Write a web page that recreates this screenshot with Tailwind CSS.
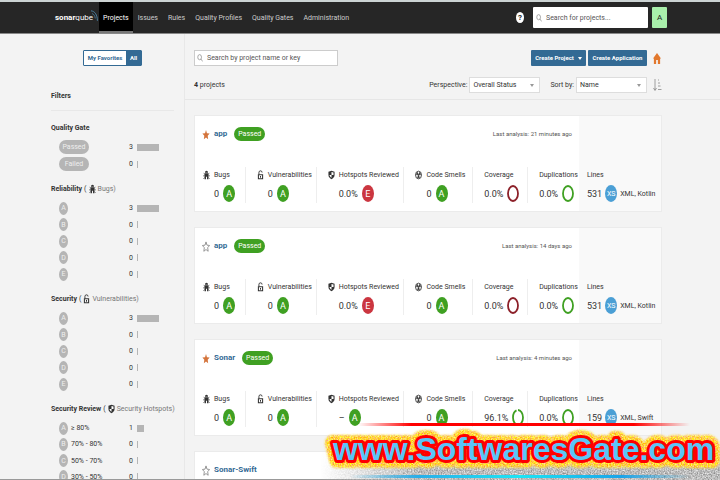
<!DOCTYPE html>
<html lang="en">

<head>
    <meta charset="UTF-8">
    <meta name="viewport" content="width=device-width, initial-scale=1.0">
    <title>Projects - SonarQube</title>
    <script src="https://cdn.jsdelivr.net/npm/@tailwindcss/browser@4"></script>
</head>

<body class="flex h-screen flex-col overflow-hidden border-b border-[#999] bg-[#f3f3f3] font-[Roboto,'Liberation_Sans',sans-serif] text-[7px] leading-[12px] text-[#333]">
    <!-- icon set -->
    <svg class="hidden">
        <symbol id="bug" viewBox="0 0 8 12" preserveAspectRatio="none">
            <path d="M2.2 3.2a1.8 2.4 0 0 1 3.6 0zM1.8 4h4.4v7H4.6V8H3.4v3H1.8z" fill="currentColor" />
            <path d="M2 5 .8 4M6 5l1.2-1M2 7H.3M6 7h1.7M2 9 .6 10.5M6 9l1.4 1.5" stroke="currentColor" stroke-width=".9" fill="none" />
        </symbol>
        <symbol id="lock" viewBox="0 0 8 12" preserveAspectRatio="none">
            <path d="M2.2 5.5V3a1.8 2 0 0 1 3.6 0" stroke="currentColor" stroke-width="1.1" fill="none" />
            <path fill-rule="evenodd" d="M1 5.2h6v6H1zm1.2 1.2v3.6h3.6V6.4z" fill="currentColor" />
            <path d="M3.4 7.2h1.2v2H3.4z" fill="currentColor" />
        </symbol>
        <symbol id="shield" viewBox="0 0 8 12" preserveAspectRatio="none">
            <path d="M4 .8 7.5 2v4c0 2.5-1.8 4.2-3.5 5C2.3 10.2.5 8.5.5 6V2z" fill="currentColor" />
            <path d="M4 2.4 6.3 3v3H4zM4 6v3.3C2.8 8.6 1.8 7.5 1.7 6z" fill="#fff" />
        </symbol>
        <symbol id="smell" viewBox="0 0 8 12" preserveAspectRatio="none">
            <ellipse cx="4" cy="6" rx="3.4" ry="4.6" fill="none" stroke="currentColor" stroke-width="1" />
            <path d="M4 6 1.5 5.5 2.6 2.6zM4 6l2.5-.5-1.1-2.9zM4 6 2.8 9.4h2.4z" fill="currentColor" stroke="currentColor" stroke-width=".6" />
        </symbol>
        <symbol id="star" viewBox="0 0 10 12" preserveAspectRatio="none">
            <path d="M5 1l1.2 3.5 3.3.4L7.1 7.3l.6 3.9L5 9.3l-2.7 1.9.6-3.9L.5 4.9l3.3-.4z" />
        </symbol>
        <symbol id="search" viewBox="0 0 8 10" preserveAspectRatio="none">
            <path d="M6 4a2.5 3.2 0 1 1-5 0 2.5 3.2 0 0 1 5 0zM5.3 6.3 7.5 9.3" fill="none" stroke="#777" stroke-width=".8" />
        </symbol>
    </svg>

    <header class="flex h-[34px] shrink-0 items-stretch border-t-2 border-b border-t-[#ccd3d3] border-b-[#888] bg-[#262626] pr-[53px] pl-[55px] text-[#ccc]">
        <a href="#" class="flex w-11 items-center text-[8px] text-white">
            <span class="font-bold">sonar</span><span>qube</span>
            <svg class="mt-2 -ml-[3px] h-4 w-2 shrink-0 self-start" viewBox="0 0 8 16" fill="none" stroke="#4b7d9d">
                <path d="M1 .8c4 .5 6.3 4 6.400 10" /><path d="M2 3.500c2 .8 3 2.500 3.300 5" stroke-width=".8" />
            </svg>
        </a>
        <nav class="flex">
            <a href="#" class="flex items-center border-b-2 border-[#777] bg-black px-[4px] pt-[2px] text-white">Projects</a>
            <a href="#" class="flex items-center px-[5px]">Issues</a>
            <a href="#" class="flex items-center px-[5px]">Rules</a>
            <a href="#" class="flex items-center px-[5px]">Quality Profiles</a>
            <a href="#" class="flex items-center px-[5px]">Quality Gates</a>
            <a href="#" class="flex items-center px-[5px]">Administration</a>
        </nav>
        <div class="ml-auto flex items-center">
            <button aria-label="Help" class="mr-[9px] h-[11px] w-[8px] rounded-[50%] bg-white text-[8px] leading-[11px] font-bold text-[#222]">?</button>
            <label class="flex h-[21px] w-[115px] items-center gap-1 rounded-[1px] bg-white pl-[3px]">
                <svg class="h-2 w-[6px] shrink-0"><use href="#search" /></svg>
                <input type="search" aria-label="Search for projects" placeholder="Search for projects..." class="w-full min-w-0 outline-none placeholder:text-[#555]">
            </label>
            <button class="ml-1 h-[21px] w-[15px] rounded-[1px] bg-[#a9efab] text-[8px] text-[#222]">A</button>
        </div>
    </header>

    <div class="flex min-h-0 flex-1">
        <aside class="w-[185px] shrink-0 overflow-hidden border-r border-[#e8e8e8] pt-4 pr-[10px] pl-[51px]">
            <div class="ml-8 flex h-4 w-[59px] rounded-[1px] border border-[#336a94] text-[6px] font-bold whitespace-nowrap">
                <button class="flex-1 bg-white text-[#336a94]">My Favorites</button>
                <button class="w-[15px] bg-[#336a94] text-white">All</button>
            </div>
            <h2 class="mt-[22px] border-b border-[#e8e8e8] pt-[2px] pb-2 font-bold">Filters</h2>
            <div id="facets" class="mt-[6px]"></div>
        </aside>

        <main class="min-w-0 flex-1 overflow-hidden">
            <div class="border-b border-[#e6e6e6] pt-4 pr-[58px] pb-[6px] pl-[9px]">
                <div class="flex items-center justify-between">
                    <label class="flex h-4 w-36 items-center gap-1 border border-[#ccc] bg-white pl-[2px]">
                        <svg class="h-2 w-[6px] shrink-0"><use href="#search" /></svg>
                        <input type="search" aria-label="Search projects" placeholder="Search by project name or key" class="w-full min-w-0 outline-none placeholder:text-[#555]">
                    </label>
                    <div class="flex items-center text-[6px] font-bold whitespace-nowrap text-white">
                        <button class="mr-[2px] flex h-4 w-[55px] items-center justify-center gap-1 rounded-[1px] bg-[#336a94]">Create Project
                            <span class="border-x-2 border-t-3 border-x-transparent border-t-white"></span></button>
                        <button class="h-4 w-[59px] rounded-[1px] bg-[#336a94]">Create Application</button>
                        <a href="#" aria-label="Home" class="ml-[6px] w-[9px]">
                            <svg class="h-[11px] w-[8px]" viewBox="0 0 9 11" preserveAspectRatio="none" fill="#e2782d"><path d="M4.5 0 9 5.5H8V11H5.5V7h-2v4H1V5.5H0z" /></svg>
                        </a>
                    </div>
                </div>
                <div class="mt-[11px] flex items-center justify-between">
                    <p><b>4</b> projects</p>
                    <div class="flex items-center">
                        <label for="perspective">Perspective:</label>
                        <div class="relative ml-[2px] w-[71px]">
                            <select id="perspective" class="block h-4 w-full appearance-none border border-[#ddd] bg-white pl-[3px]">
                                <option>Overall Status</option>
                            </select>
                            <span class="absolute top-[7px] right-[6px] border-x-2 border-t-3 border-x-transparent border-t-[#999]"></span>
                        </div>
                        <label for="sort" class="ml-[10px]">Sort by:</label>
                        <div class="relative ml-[2px] w-[71px]">
                            <select id="sort" class="block h-4 w-full appearance-none border border-[#ddd] bg-white pl-[3px]">
                                <option>Name</option>
                            </select>
                            <span class="absolute top-[7px] right-[6px] border-x-2 border-t-3 border-x-transparent border-t-[#999]"></span>
                        </div>
                        <button aria-label="Sort direction" class="ml-[6px]">
                            <svg class="h-3 w-[9px]" viewBox="0 0 9 12" fill="none" stroke="#888" stroke-width=".8"><path d="M2 0v11M.5 9 2 11.5 3.5 9M5 1h1M5 4h2M5 7h2.5M5 10.5h3.5" /></svg>
                        </button>
                    </div>
                </div>
            </div>
            <div id="projects" class="flex flex-col gap-[15px] pt-[15px] pr-[58px] pl-[9px]"></div>
        </main>
    </div>

    <!-- site banner over the lower right corner -->
    <svg class="pointer-events-none absolute right-0 bottom-0 h-[64px] w-[400px]" viewBox="0 0 400 64">
        <defs>
            <filter id="grain" x="0" y="0" width="100%" height="100%" color-interpolation-filters="sRGB">
                <feTurbulence type="fractalNoise" baseFrequency=".7" numOctaves="2" seed="3" />
                <feColorMatrix values=".6 0 0 0 .44  .6 0 0 0 .44  .6 0 0 0 .44  0 0 0 0 1" />
                <feComposite in2="SourceGraphic" operator="in" />
            </filter>
            <filter id="gold" x="-5%" y="-50%" width="110%" height="200%" color-interpolation-filters="sRGB">
                <feGaussianBlur in="SourceGraphic" stdDeviation="1.2" result="soft" />
                <feTurbulence type="fractalNoise" baseFrequency=".7" numOctaves="2" seed="8" />
                <feColorMatrix values="0 0 0 0 1  .8 0 0 0 .42  0 1.2 0 0 -.35  0 0 0 0 1" />
                <feComposite in2="soft" operator="in" />
            </filter>
            <linearGradient id="fadeX"><stop offset="0" stop-color="#fff" stop-opacity="0" /><stop offset=".25" stop-color="#fff" /><stop offset="1" stop-color="#fff" /></linearGradient>
            <linearGradient id="fadeY" x2="0" y2="1"><stop offset="0" stop-color="#000" /><stop offset=".7" stop-color="#000" stop-opacity="0" /></linearGradient>
            <mask id="fade"><rect y="30" width="400" height="34" fill="url(#fadeX)" /><rect y="30" width="400" height="34" fill="url(#fadeY)" /></mask>
            <linearGradient id="red"><stop offset="0" stop-color="red" stop-opacity="0" /><stop offset=".16" stop-color="red" /><stop offset=".83" stop-color="red" /><stop offset="1" stop-color="red" stop-opacity="0" /></linearGradient>
            <linearGradient id="cyan"><stop offset="0" stop-color="#29aee8" stop-opacity="0" /><stop offset=".2" stop-color="#29aee8" /><stop offset=".5" stop-color="#1de4f4" /><stop offset=".8" stop-color="#1aa3e8" /><stop offset="1" stop-color="#29aee8" stop-opacity="0" /></linearGradient>
        </defs>
        <g mask="url(#fade)"><rect y="30" width="400" height="34" filter="url(#grain)" /></g>
        <rect x="38" y="7" width="332" height="3" fill="url(#red)" />
        <rect x="30" y="59" width="340" height="3" fill="url(#cyan)" />
        <g font-family="Liberation Sans, sans-serif" font-weight="700" font-size="32" stroke-linejoin="round">
            <text x="13" y="44" fill="#fd0" stroke="#fd0" stroke-width="16" filter="url(#gold)">www.SoftwaresGate.com</text>
            <text x="13" y="44" fill="#5bc5f8" stroke="red" stroke-width="6" paint-order="stroke">www.SoftwaresGate.com</text>
        </g>
    </svg>

    <script>
        const icon = (id, cls) => `<svg class="shrink-0 ${cls}"><use href="#${id}" /></svg>`;

        // Sidebar facets
        const letters = ['A', 'B', 'C', 'D', 'E'];
        const ratings = letters.map((l, i) => [l, i ? 0 : 3, '']);
        const ranges = ['≥ 80%', '70% - 80%', '50% - 70%', '30% - 50%'];
        const facets = [
            { title: 'Quality Gate', rows: [['Passed', 3, ''], ['Failed', 0, '']], height: 'h-[33px]' },
            { title: 'Reliability', icon: 'bug', note: 'Bugs', rows: ratings, height: 'h-[82px]' },
            { title: 'Security', icon: 'lock', note: 'Vulnerabilities', rows: ratings, height: 'h-[82px]' },
            { title: 'Security Review', icon: 'shield', note: 'Security Hotspots', rows: ranges.map((r, i) => [letters[i], i ? 0 : 1, r]), height: 'h-[65px]' },
        ];
        document.getElementById('facets').innerHTML = facets.map(f => `
            <section class="mb-[6px]">
                <h3 class="flex h-[22px] items-center gap-[2px] whitespace-nowrap"><b>${f.title}</b>
                    ${f.icon ? `<span>(</span>${icon(f.icon, 'h-[10px] w-[7px]')}<span class="text-[#777]">${f.note})</span>` : ''}</h3>
                <ul class="flex flex-col justify-between ${f.height}">
                    ${f.rows.map(([name, count, range]) => `
                    <li class="flex h-4 items-center pl-2">
                        <span class="flex items-center justify-center bg-[#b5b5b5] text-[#eee] ${name.length > 1 ? 'h-[14px] w-[30px] rounded-full' : 'h-[13px] w-[9px] rounded-[50%]'}">${name}</span>
                        <span class="pl-[3px]">${range}</span>
                        <span class="ml-auto">${count}</span>
                        <span class="mr-[15px] ml-1 w-[22px]"><span class="block h-[7px] min-w-px bg-[#b5b5b5]" style="width:${count * 100 / 3}%"></span></span>
                    </li>`).join('')}
                </ul>
            </section>`).join('');

        // Project cards
        const grade = l => `<span class="flex h-[17px] w-[12px] items-center justify-center rounded-[50%] text-[9px] text-white ${l === 'E' ? 'bg-[#cb3640]' : 'bg-[#3fa022]'}">${l}</span>`;
        const ring = (color, arc) => `<svg class="h-[17px] w-[12px]" viewBox="0 0 12 17" fill="none"><path d="M6 1a5 7.5 0 0 1 0 15 5 7.5 0 0 1 0-15" stroke="${color}" stroke-width="1.8" pathLength="100" stroke-dasharray="${arc} 100" /></svg>`;
        const measure = (label, value, mark, id) => `
            <div class="flex border-l border-[#eee] pl-[11px] whitespace-nowrap first:border-0 first:pl-2">
                ${id ? icon(id, 'mt-[3px] mr-[4px] h-[10px] w-[7px]') : ''}
                <div>
                    <div class="h-4 leading-[16px]">${label}</div>
                    <div class="mt-[2px] flex h-[17px] items-center gap-1 text-[9px]">${value}${mark}</div>
                </div>
            </div>`;
        const projects = [
            { name: 'app', fav: true, ago: '21 minutes', hotspots: ['0.0%', 'E'], coverage: '0.0%', lines: 531, lang: 'XML, Kotlin' },
            { name: 'app', fav: false, ago: '14 days', hotspots: ['0.0%', 'E'], coverage: '0.0%', lines: 531, lang: 'XML, Kotlin' },
            { name: 'Sonar', fav: true, ago: '4 minutes', hotspots: ['–', 'A'], coverage: '96.1%', lines: 159, lang: 'XML, Swift' },
        ];
        const title = (name, fav) => `
            ${icon('star', fav ? 'mr-1 h-[11px] w-[8px] fill-[#d4743b]' : 'mr-1 h-[11px] w-[8px] fill-none stroke-[#888]')}
            <a href="#" class="mr-[7px] text-[8px] font-bold text-[#336a94]">${name}</a>`;
        document.getElementById('projects').innerHTML = projects.map(p => `
            <article class="flex h-[97px] shrink-0 border border-[#ebebeb] bg-white">
                <div class="min-w-0 flex-1">
                    <div class="flex h-9 items-center px-[7px]">
                        ${title(p.name, p.fav)}
                        <span class="flex h-[14px] w-[31px] items-center justify-center rounded-full bg-[#3fa022] text-white">Passed</span>
                        <span class="ml-auto text-[6px] text-[#555]">Last analysis: ${p.ago} ago</span>
                    </div>
                    <div class="mt-[15px] grid h-[36px] grid-cols-[50fr_71fr_88fr_69fr_55fr_52fr]">
                        ${measure('Bugs', '<span>0</span>', grade('A'), 'bug')}
                        ${measure('Vulnerabilities', '<span>0</span>', grade('A'), 'lock')}
                        ${measure('Hotspots Reviewed', p.hotspots[0], grade(p.hotspots[1]), 'shield')}
                        ${measure('Code Smells', '<span>0</span>', grade('A'), 'smell')}
                        ${measure('Coverage', p.coverage, p.coverage === '0.0%' ? ring('#8c2029', 100) : ring('#3fa022', 96))}
                        ${measure('Duplications', '0.0%', ring('#3fa022', 100))}
                    </div>
                </div>
                <div class="w-[82px] bg-[#f9f9f9] pt-[51px] pl-2">
                    <div class="h-4 leading-[16px]">Lines</div>
                    <div class="mt-[2px] flex h-[17px] items-center gap-[3px] text-[9px] whitespace-nowrap">${p.lines}
                        <span class="flex h-[17px] w-[12px] items-center justify-center rounded-[50%] bg-[#4b9fd5] text-[7px] text-white">XS</span>
                        <span class="text-[7px]">${p.lang}</span></div>
                </div>
            </article>`).join('') + `
            <article class="flex h-[97px] shrink-0 border border-[#ebebeb] bg-white">
                <div class="flex h-9 items-center px-[7px]">${title('Sonar-Swift', false)}</div>
            </article>`;
    </script>
</body>

</html>
